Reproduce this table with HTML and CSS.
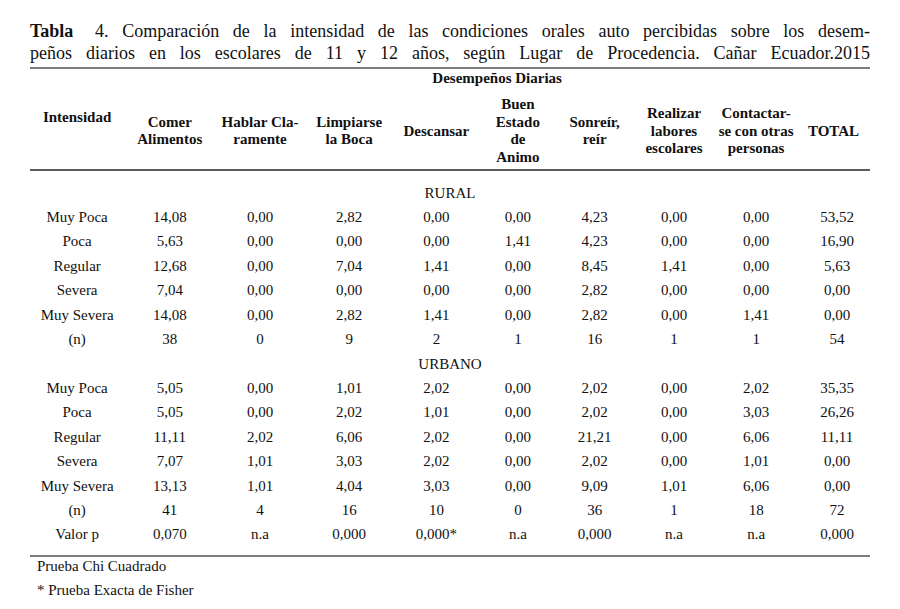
FILE: index.html
```html
<!DOCTYPE html>
<html lang="es">
<head>
<meta charset="utf-8">
<title>Tabla 4</title>
<link rel="stylesheet" href="styles.css">
</head>
<body>
<div class="page">
  <div class="caption">
    <span class="line"><b class="tag">Tabla</b> 4. Comparación de la intensidad de las condiciones orales auto percibidas sobre los desem-</span>
    <span class="line">peños diarios en los escolares de 11 y 12 años, según Lugar de Procedencia. Cañar Ecuador.2015</span>
  </div>
  <div class="rule rule-top"></div>
  <div class="grid super"><div class="super-label">Desempeños Diarias</div></div>
  <div class="grid head">
    <div class="h h-first">Intensidad</div>
    <div class="h">Comer<br>Alimentos</div>
    <div class="h">Hablar Cla-<br>ramente</div>
    <div class="h">Limpiarse<br>la Boca</div>
    <div class="h">Descansar</div>
    <div class="h">Buen<br>Estado<br>de<br>Animo</div>
    <div class="h">Sonreír,<br>reír</div>
    <div class="h">Realizar<br>labores<br>escolares</div>
    <div class="h">Contactar-<br>se con otras<br>personas</div>
    <div class="h">TOTAL</div>
  </div>
  <div class="rule rule-mid"></div>
  <div class="body">
    <div class="group">RURAL</div>
    <div class="grid row"><div>Muy Poca</div><div>14,08</div><div>0,00</div><div>2,82</div><div>0,00</div><div>0,00</div><div>4,23</div><div>0,00</div><div>0,00</div><div class="tot">53,52</div></div>
    <div class="grid row"><div>Poca</div><div>5,63</div><div>0,00</div><div>0,00</div><div>0,00</div><div>1,41</div><div>4,23</div><div>0,00</div><div>0,00</div><div class="tot">16,90</div></div>
    <div class="grid row"><div>Regular</div><div>12,68</div><div>0,00</div><div>7,04</div><div>1,41</div><div>0,00</div><div>8,45</div><div>1,41</div><div>0,00</div><div class="tot">5,63</div></div>
    <div class="grid row"><div>Severa</div><div>7,04</div><div>0,00</div><div>0,00</div><div>0,00</div><div>0,00</div><div>2,82</div><div>0,00</div><div>0,00</div><div class="tot">0,00</div></div>
    <div class="grid row"><div>Muy Severa</div><div>14,08</div><div>0,00</div><div>2,82</div><div>1,41</div><div>0,00</div><div>2,82</div><div>0,00</div><div>1,41</div><div class="tot">0,00</div></div>
    <div class="grid row"><div>(n)</div><div>38</div><div>0</div><div>9</div><div>2</div><div>1</div><div>16</div><div>1</div><div>1</div><div class="tot">54</div></div>
    <div class="group">URBANO</div>
    <div class="grid row"><div>Muy Poca</div><div>5,05</div><div>0,00</div><div>1,01</div><div>2,02</div><div>0,00</div><div>2,02</div><div>0,00</div><div>2,02</div><div class="tot">35,35</div></div>
    <div class="grid row"><div>Poca</div><div>5,05</div><div>0,00</div><div>2,02</div><div>1,01</div><div>0,00</div><div>2,02</div><div>0,00</div><div>3,03</div><div class="tot">26,26</div></div>
    <div class="grid row"><div>Regular</div><div>11,11</div><div>2,02</div><div>6,06</div><div>2,02</div><div>0,00</div><div>21,21</div><div>0,00</div><div>6,06</div><div class="tot">11,11</div></div>
    <div class="grid row"><div>Severa</div><div>7,07</div><div>1,01</div><div>3,03</div><div>2,02</div><div>0,00</div><div>2,02</div><div>0,00</div><div>1,01</div><div class="tot">0,00</div></div>
    <div class="grid row"><div>Muy Severa</div><div>13,13</div><div>1,01</div><div>4,04</div><div>3,03</div><div>0,00</div><div>9,09</div><div>1,01</div><div>6,06</div><div class="tot">0,00</div></div>
    <div class="grid row"><div>(n)</div><div>41</div><div>4</div><div>16</div><div>10</div><div>0</div><div>36</div><div>1</div><div>18</div><div class="tot">72</div></div>
    <div class="grid row"><div>Valor p</div><div>0,070</div><div>n.a</div><div>0,000</div><div>0,000*</div><div>n.a</div><div>0,000</div><div>n.a</div><div>n.a</div><div class="tot">0,000</div></div>
  </div>
  <div class="rule rule-bot"></div>
  <div class="notes">
    <p>Prueba Chi Cuadrado</p>
    <p>* Prueba Exacta de Fisher</p>
  </div>
</div>
</body>
</html>
```
FILE: styles.css
```css
html, body {
  margin: 0;
  padding: 0;
  background: #ffffff;
}

body {
  width: 900px;
  height: 609px;
  overflow: hidden;
  font-family: "Liberation Serif", "Times New Roman", serif;
  color: #111111;
}

.page {
  padding: 20px 30px 0 30px;
  width: 840px;
}

.caption {
  font-size: 18px;
  line-height: 22px;
}

.caption .line {
  display: block;
  text-align: justify;
  text-align-last: justify;
  white-space: nowrap;
}

.caption .tag {
  font-weight: bold;
  margin-right: 8px;
}

.rule {
  width: 840px;
}

.rule-top {
  margin-top: 2.75px;
  height: 2px;
  background: #7c7c7c;
}

.rule-mid {
  margin-top: 3px;
  height: 1.5px;
  background: #5c5c5c;
}

.rule-bot {
  margin-top: 7.75px;
  height: 2px;
  background: #7c7c7c;
}

.grid {
  display: grid;
  grid-template-columns: 94.25px 91px 89.5px 88.75px 85.75px 77.25px 76.25px 82.5px 81.75px 73px;
}

.super {
  margin-top: 1.25px;
  font-size: 15px;
  line-height: 17.5px;
  font-weight: bold;
}

.super-label {
  grid-column: 2 / 11;
  text-align: center;
}

.head {
  margin-top: 8.75px;
  height: 70px;
  font-size: 15px;
  line-height: 17.5px;
  font-weight: bold;
}

.h {
  align-self: center;
  text-align: center;
  white-space: nowrap;
}

.h-first {
  align-self: start;
  padding-top: 12.75px;
}

.body {
  padding-top: 9.8px;
  font-size: 15px;
}

.group {
  height: 24.43px;
  line-height: 24.43px;
  text-align: center;
}

.row {
  height: 24.43px;
  line-height: 24.43px;
}

.row > div {
  text-align: center;
  white-space: nowrap;
}

.row > .tot {
  padding-left: 7px;
}

.notes {
  margin-top: -3px;
  padding-left: 7px;
  font-size: 15px;
  line-height: 24px;
}

.notes p {
  margin: 0;
}
```
